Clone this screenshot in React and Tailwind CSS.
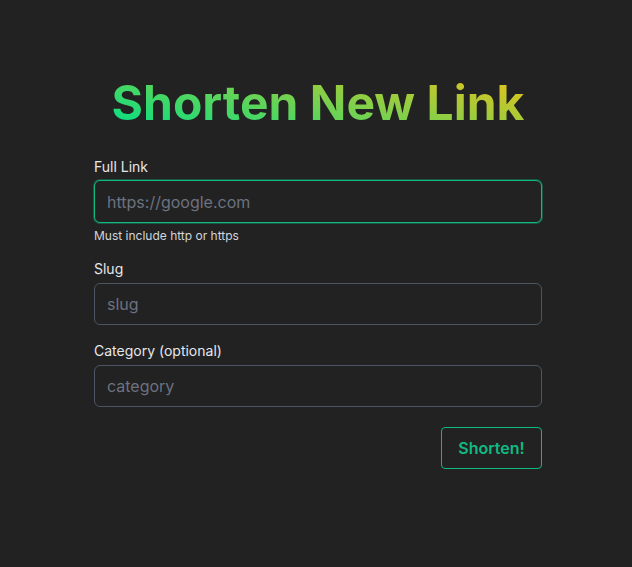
export default function App() {
  return (
    <div
      className="min-h-[567px] w-full bg-[#222222] pt-[79px] flex justify-center pl-[4px]"
      style={{ fontFamily: "Inter, 'Noto Sans', sans-serif" }}
    >
      <div className="w-[448px]">
        <h1 className="text-center text-5xl font-bold leading-none pb-[2px]">
          <span className="inline-block bg-linear-14/srgb from-[#00e086] to-[#e8c21a] bg-clip-text text-transparent pb-[2px]">
            Shorten New Link
          </span>
        </h1>
        <form className="mt-[26px]" onSubmit={(e) => e.preventDefault()}>
          <label className="block text-sm leading-5 text-[#e5e7eb] mb-[3px]">Full Link</label>
          <input
            className="block w-full h-[43px] rounded-md border border-[#10b981] bg-[#222222] px-3 text-base text-[#e5e7eb] placeholder-[#6b7280] outline-none shadow-[0_0_0_1px_rgba(16,185,129,0.35)]"
            placeholder="https://google.com"
          />
          <p className="mt-[5px] text-xs leading-4 text-[#d1d5db]">Must include http or https</p>
          <label className="mt-[15px] block text-sm leading-5 text-[#e5e7eb] mb-[4px]">Slug</label>
          <input
            className="block w-full h-[42px] rounded-md border border-[#4b5563] bg-[#222222] px-3 text-base text-[#e5e7eb] placeholder-[#6b7280] outline-none"
            placeholder="slug"
          />
          <label className="mt-[16px] block text-sm leading-5 text-[#e5e7eb] mb-[4px]">Category (optional)</label>
          <input
            className="block w-full h-[42px] rounded-md border border-[#4b5563] bg-[#222222] px-3 text-base text-[#e5e7eb] placeholder-[#6b7280] outline-none"
            placeholder="category"
          />
          <div className="mt-[20px] flex justify-end">
            <button
              type="submit"
              className="h-[42px] w-[101px] rounded border border-[#10b981] text-base font-semibold text-[#10b981]"
            >
              Shorten!
            </button>
          </div>
        </form>
      </div>
    </div>
  );
}
